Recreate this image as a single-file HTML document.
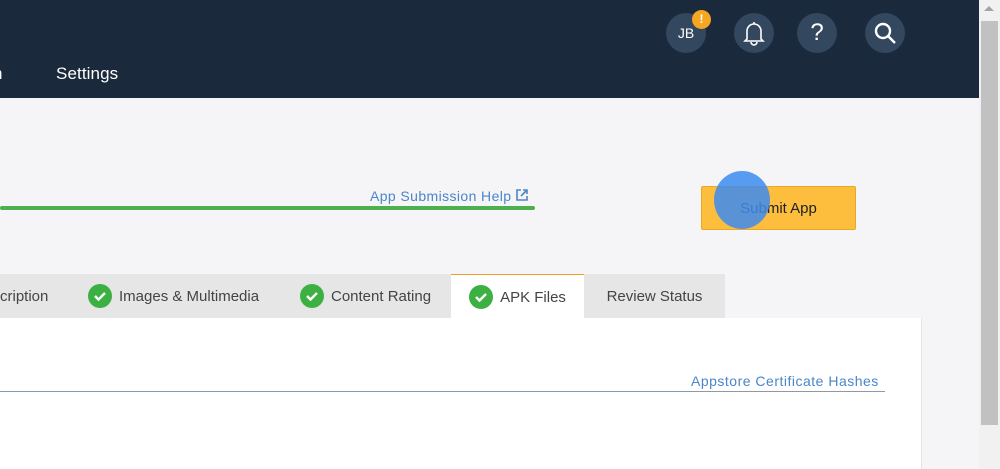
<!DOCTYPE html>
<html><head><style>
*{margin:0;padding:0;box-sizing:border-box}
body{width:1000px;height:469px;overflow:hidden;background:#f5f5f7;font-family:"Liberation Sans",sans-serif;position:relative}
.hdr{position:absolute;left:0;top:0;width:979px;height:98px;background:#1a293b}
.ic{position:absolute;top:13px;width:40px;height:40px;border-radius:50%;background:#33475f;color:#fff;display:flex;align-items:center;justify-content:center}
.sb{position:absolute;left:979px;top:0;width:21px;height:469px;background:#f1f1f1}
.thumb{position:absolute;left:981px;top:21px;width:17px;height:404px;background:#c1c1c1}
.tab{position:absolute;top:274px;height:44px;background:#e6e6e6;color:#444;font-size:15px;display:flex;align-items:center}
.chk{width:24px;height:24px;border-radius:50%;background:#3cb043;display:inline-flex;align-items:center;justify-content:center;margin-right:7px}
</style></head><body>
<div class="hdr">
<div style="position:absolute;left:56px;top:64px;color:#fff;font-size:17px;letter-spacing:0.1px">Settings</div>
<div style="position:absolute;left:-7px;top:64px;color:#fff;font-size:17px">n</div>
<div class="ic" style="left:666px;font-size:14px">JB</div>
<div style="position:absolute;left:692px;top:10px;width:19px;height:19px;border-radius:50%;background:#f5a623;color:#fff;font-size:12px;font-weight:bold;text-align:center;line-height:19px">!</div>
<div class="ic" style="left:734px"><svg width="24" height="26" viewBox="0 0 24 26" fill="none" stroke="#fff" stroke-width="1.6"><path d="M12 2v2M5 19V11a7 7 0 0 1 14 0v8l2 2H3z"/><path d="M9 22a3 3 0 0 0 6 0"/></svg></div>
<div class="ic" style="left:797px;font-size:24px">?</div>
<div class="ic" style="left:865px"><svg width="24" height="24" viewBox="0 0 24 24" fill="none" stroke="#fff" stroke-width="2.4"><circle cx="10" cy="10" r="7"/><path d="M15 15l7 7"/></svg></div>
</div>
<div class="sb"></div><div style="position:absolute;left:984px;top:6px;border:5px solid transparent;border-bottom:5px solid #a3a3a3;border-top:0;width:0;height:0"></div>
<div class="thumb"></div>
<div style="position:absolute;left:370px;top:188px;color:#4a86c8;font-size:14px;letter-spacing:0.4px">App Submission Help <svg width="12" height="12" viewBox="0 0 12 12" fill="none" stroke="#4a86c8" stroke-width="1.6"><path d="M5 1H1v10h10V7M7 1h4v4M11 1L5 7"/></svg></div>
<div style="position:absolute;left:0;top:206px;width:535px;height:4px;background:#4caf50;border-radius:2px"></div>
<div style="position:absolute;left:701px;top:186px;width:155px;height:44px;background:#fdbd3d;border:1px solid #e8a82c;border-radius:2px;font-size:15px;color:#222;display:flex;align-items:center;justify-content:center">Submit App</div>
<div style="position:absolute;left:714px;top:171px;width:56px;height:58px;border-radius:50%;background:rgba(60,140,240,0.85)"></div>
<div style="position:absolute;left:0;top:318px;width:922px;height:151px;background:#fff;border-right:1px solid #e4e4e4"></div>
<div class="tab" style="left:0;width:451px">
<span style="margin-left:0">cription</span>
<span style="position:absolute;left:88px;display:flex;align-items:center"><span class="chk"><svg width="14" height="14" viewBox="0 0 14 14"><path d="M2 7l3.5 3.5L12 4" stroke="#fff" stroke-width="2.4" fill="none"/></svg></span>Images &amp; Multimedia</span>
<span style="position:absolute;left:300px;display:flex;align-items:center"><span class="chk"><svg width="14" height="14" viewBox="0 0 14 14"><path d="M2 7l3.5 3.5L12 4" stroke="#fff" stroke-width="2.4" fill="none"/></svg></span>Content Rating</span>
</div>
<div class="tab" style="left:451px;width:133px;background:#fff;border-top:1px solid #f0a020;justify-content:center;height:45px"><span class="chk"><svg width="14" height="14" viewBox="0 0 14 14"><path d="M2 7l3.5 3.5L12 4" stroke="#fff" stroke-width="2.4" fill="none"/></svg></span>APK Files</div>
<div class="tab" style="left:584px;width:141px;justify-content:center">Review Status</div>
<div style="position:absolute;left:691px;top:373px;color:#4a86c8;font-size:14px;letter-spacing:0.5px">Appstore Certificate Hashes</div>
<div style="position:absolute;left:0;top:391px;width:885px;height:1px;background:#8a9aaa"></div>
</body></html>
